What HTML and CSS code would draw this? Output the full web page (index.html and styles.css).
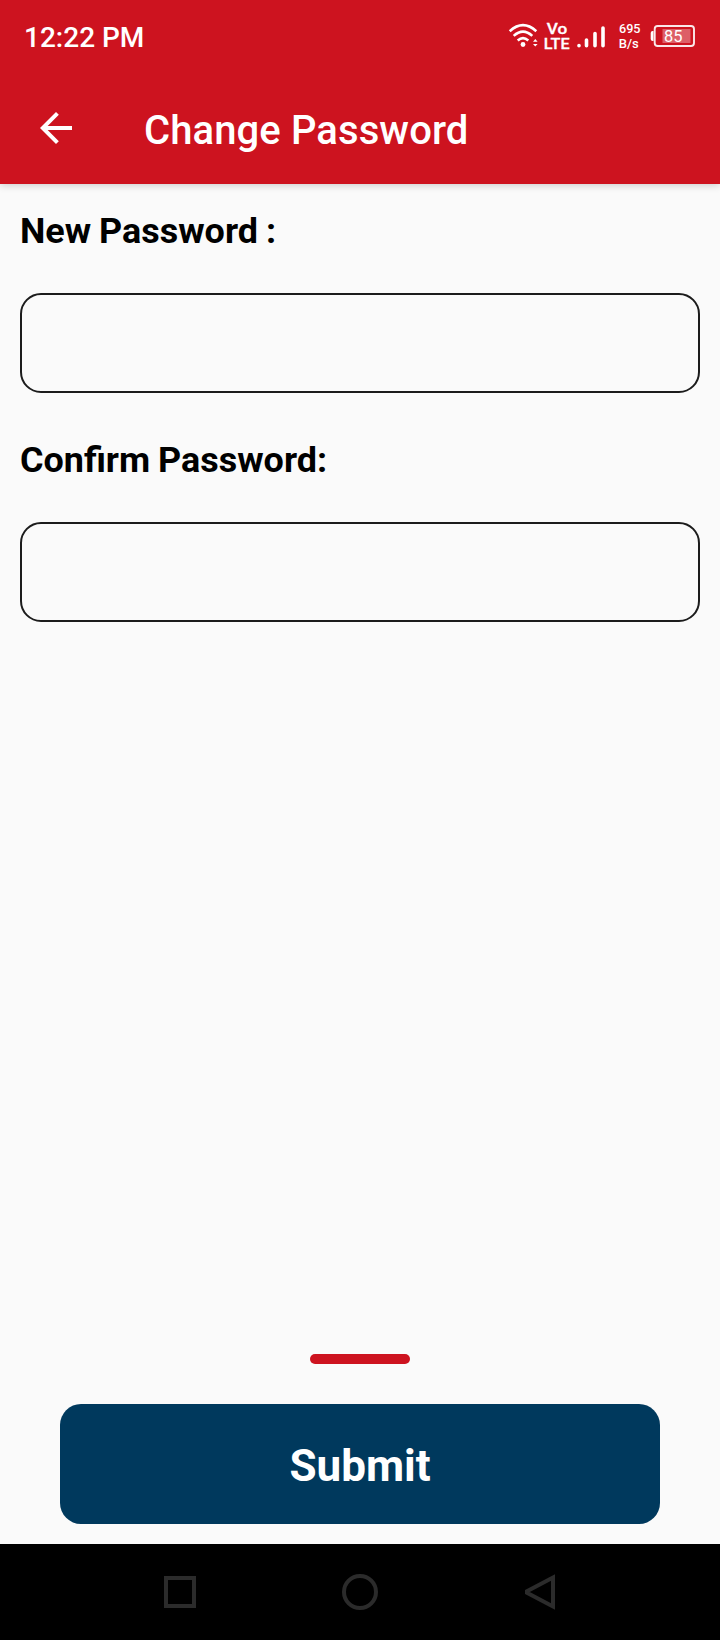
FILE: index.html
```html
<!DOCTYPE html>
<html lang="en">
<head>
<meta charset="utf-8">
<title>Change Password</title>
<link rel="stylesheet" href="styles.css">
</head>
<body>
<div class="screen">
  <header class="header">
    <div class="status-bar">
      <span class="clock">12:22 PM</span>
      <svg class="status-icons" viewBox="500 10 200 50" width="200" height="50">
        <g fill="none" stroke="#fff" stroke-width="2.6">
          <path d="M509.700 31.200Q523 19.200 536.300 31.200"/>
          <path d="M513.700 35.900Q523 27.500 532.300 35.900"/>
          <path d="M517.700 40.400Q523 35.800 528.300 40.400"/>
        </g>
        <circle cx="523" cy="44.500" r="2.400" fill="#fff"/>
        <path d="M533 41.700l2.300-2.700 2.300 2.700zM533 43.900l2.300 2.700 2.300-2.700z" fill="#fff"/>
        <text class="volte" x="546.800" y="34.200" textLength="20.500" lengthAdjust="spacingAndGlyphs">Vo</text>
        <text class="volte" x="543.800" y="49.200" textLength="25.800" lengthAdjust="spacingAndGlyphs">LTE</text>
        <g stroke="#fff" stroke-width="3.600" stroke-linecap="round">
          <path d="M579 45.600v.1M586.500 40v5.700M595 33.500v12.200M603 28v17.700"/>
        </g>
        <text class="speed" x="619" y="33.200" textLength="21.500" lengthAdjust="spacingAndGlyphs">695</text>
        <text class="speed" x="618.800" y="48.200" textLength="20" lengthAdjust="spacingAndGlyphs">B/s</text>
        <rect x="654.700" y="26" width="39.300" height="20" rx="3" fill="none" stroke="#fff" stroke-opacity=".9" stroke-width="1.900"/>
        <path d="M653.500 31h-.8q-2 0-2 2v6q0 2 2 2h.8z" fill="#fff"/>
        <rect x="662.500" y="29" width="28" height="14" fill="#fff" fill-opacity=".32"/>
        <text class="level" x="664" y="42.300" textLength="18.500" lengthAdjust="spacingAndGlyphs">85</text>
      </svg>
    </div>
    <div class="app-bar">
      <svg class="back" viewBox="0 0 32 32" width="32" height="32">
        <path d="M32 14H7.660L18.840 2.820 16 0 0 16 16 32l2.820-2.820L7.660 18H32z" fill="#fff"/>
      </svg>
      <h1 class="title">Change Password</h1>
    </div>
  </header>
  <main class="form">
    <label class="label" for="new-password">New Password :</label>
    <input class="field" id="new-password" type="password">
    <label class="label label-next" for="confirm-password">Confirm Password:</label>
    <input class="field" id="confirm-password" type="password">
    <div class="footer">
      <div class="handle"></div>
      <button class="submit" type="button">Submit</button>
    </div>
  </main>
  <nav class="nav-bar">
    <svg viewBox="0 0 40 40" width="40" height="40"><rect x="6" y="6" width="28" height="28"/></svg>
    <svg viewBox="0 0 40 40" width="40" height="40"><circle cx="20" cy="20" r="16"/></svg>
    <svg viewBox="0 0 40 40" width="40" height="40"><path d="M33 5.500v29L7 20.800v-1.600z"/></svg>
  </nav>
</div>
</body>
</html>
```
FILE: styles.css
```css
* {
  box-sizing: border-box;
}

body {
  margin: 0;
  font-family: Roboto, "Liberation Sans", sans-serif;
  background: #fafafa;
}

.screen {
  width: 720px;
  height: 1640px;
  display: flex;
  flex-direction: column;
}

.header {
  height: 184px;
  background: #cd131f;
  box-shadow: 0 1px 8px rgba(0, 0, 0, 0.2);
}

.status-bar {
  height: 72px;
  padding: 10px 20px 0 24px;
  display: flex;
  justify-content: space-between;
}

.clock {
  font-size: 28px;
  font-weight: 500;
  line-height: 56px;
  color: #fff;
}

.status-icons text {
  fill: #fff;
}

.volte {
  font-size: 15.5px;
  font-weight: 500;
  stroke: #fff;
  stroke-width: 0.3px;
}

.speed {
  font-size: 13px;
  font-weight: 500;
}

.level {
  font-size: 17px;
  font-weight: 400;
}

.app-bar {
  height: 112px;
  padding-left: 40px;
  display: flex;
  align-items: center;
  gap: 72px;
}

.title {
  margin: 6px 0 0;
  font-size: 40px;
  font-weight: 500;
  line-height: 48px;
  letter-spacing: 0.1px;
  color: #fff;
}

.form {
  flex: 1;
  display: flex;
  flex-direction: column;
  padding: 25px 20px 20px;
}

.label {
  height: 44px;
  font-size: 35.95px;
  font-weight: 700;
  line-height: 44px;
  word-spacing: -1px;
  color: #000;
}

.label-next {
  margin-top: 45px;
}

.field {
  height: 100px;
  margin: 40px 0 0;
  padding: 0 20px;
  border: 2px solid #1c1c1c;
  border-radius: 21px;
  background: transparent;
  font: 400 32px Roboto, sans-serif;
}

.footer {
  margin-top: auto;
  display: flex;
  flex-direction: column;
  align-items: center;
  gap: 40px;
}

.handle {
  width: 100px;
  height: 10px;
  border-radius: 5px;
  background: #cd131f;
}

.submit {
  width: 600px;
  height: 120px;
  padding: 3px 0 0;
  border: 0;
  border-radius: 21px;
  background: #00395d;
  color: #fff;
  font: 700 44px/52px Roboto, sans-serif;
}

.nav-bar {
  height: 96px;
  padding: 0 160px;
  display: flex;
  align-items: center;
  justify-content: space-between;
  background: #000;
}

.nav-bar svg {
  fill: none;
  stroke: #2b2b2b;
  stroke-width: 4;
}
```
